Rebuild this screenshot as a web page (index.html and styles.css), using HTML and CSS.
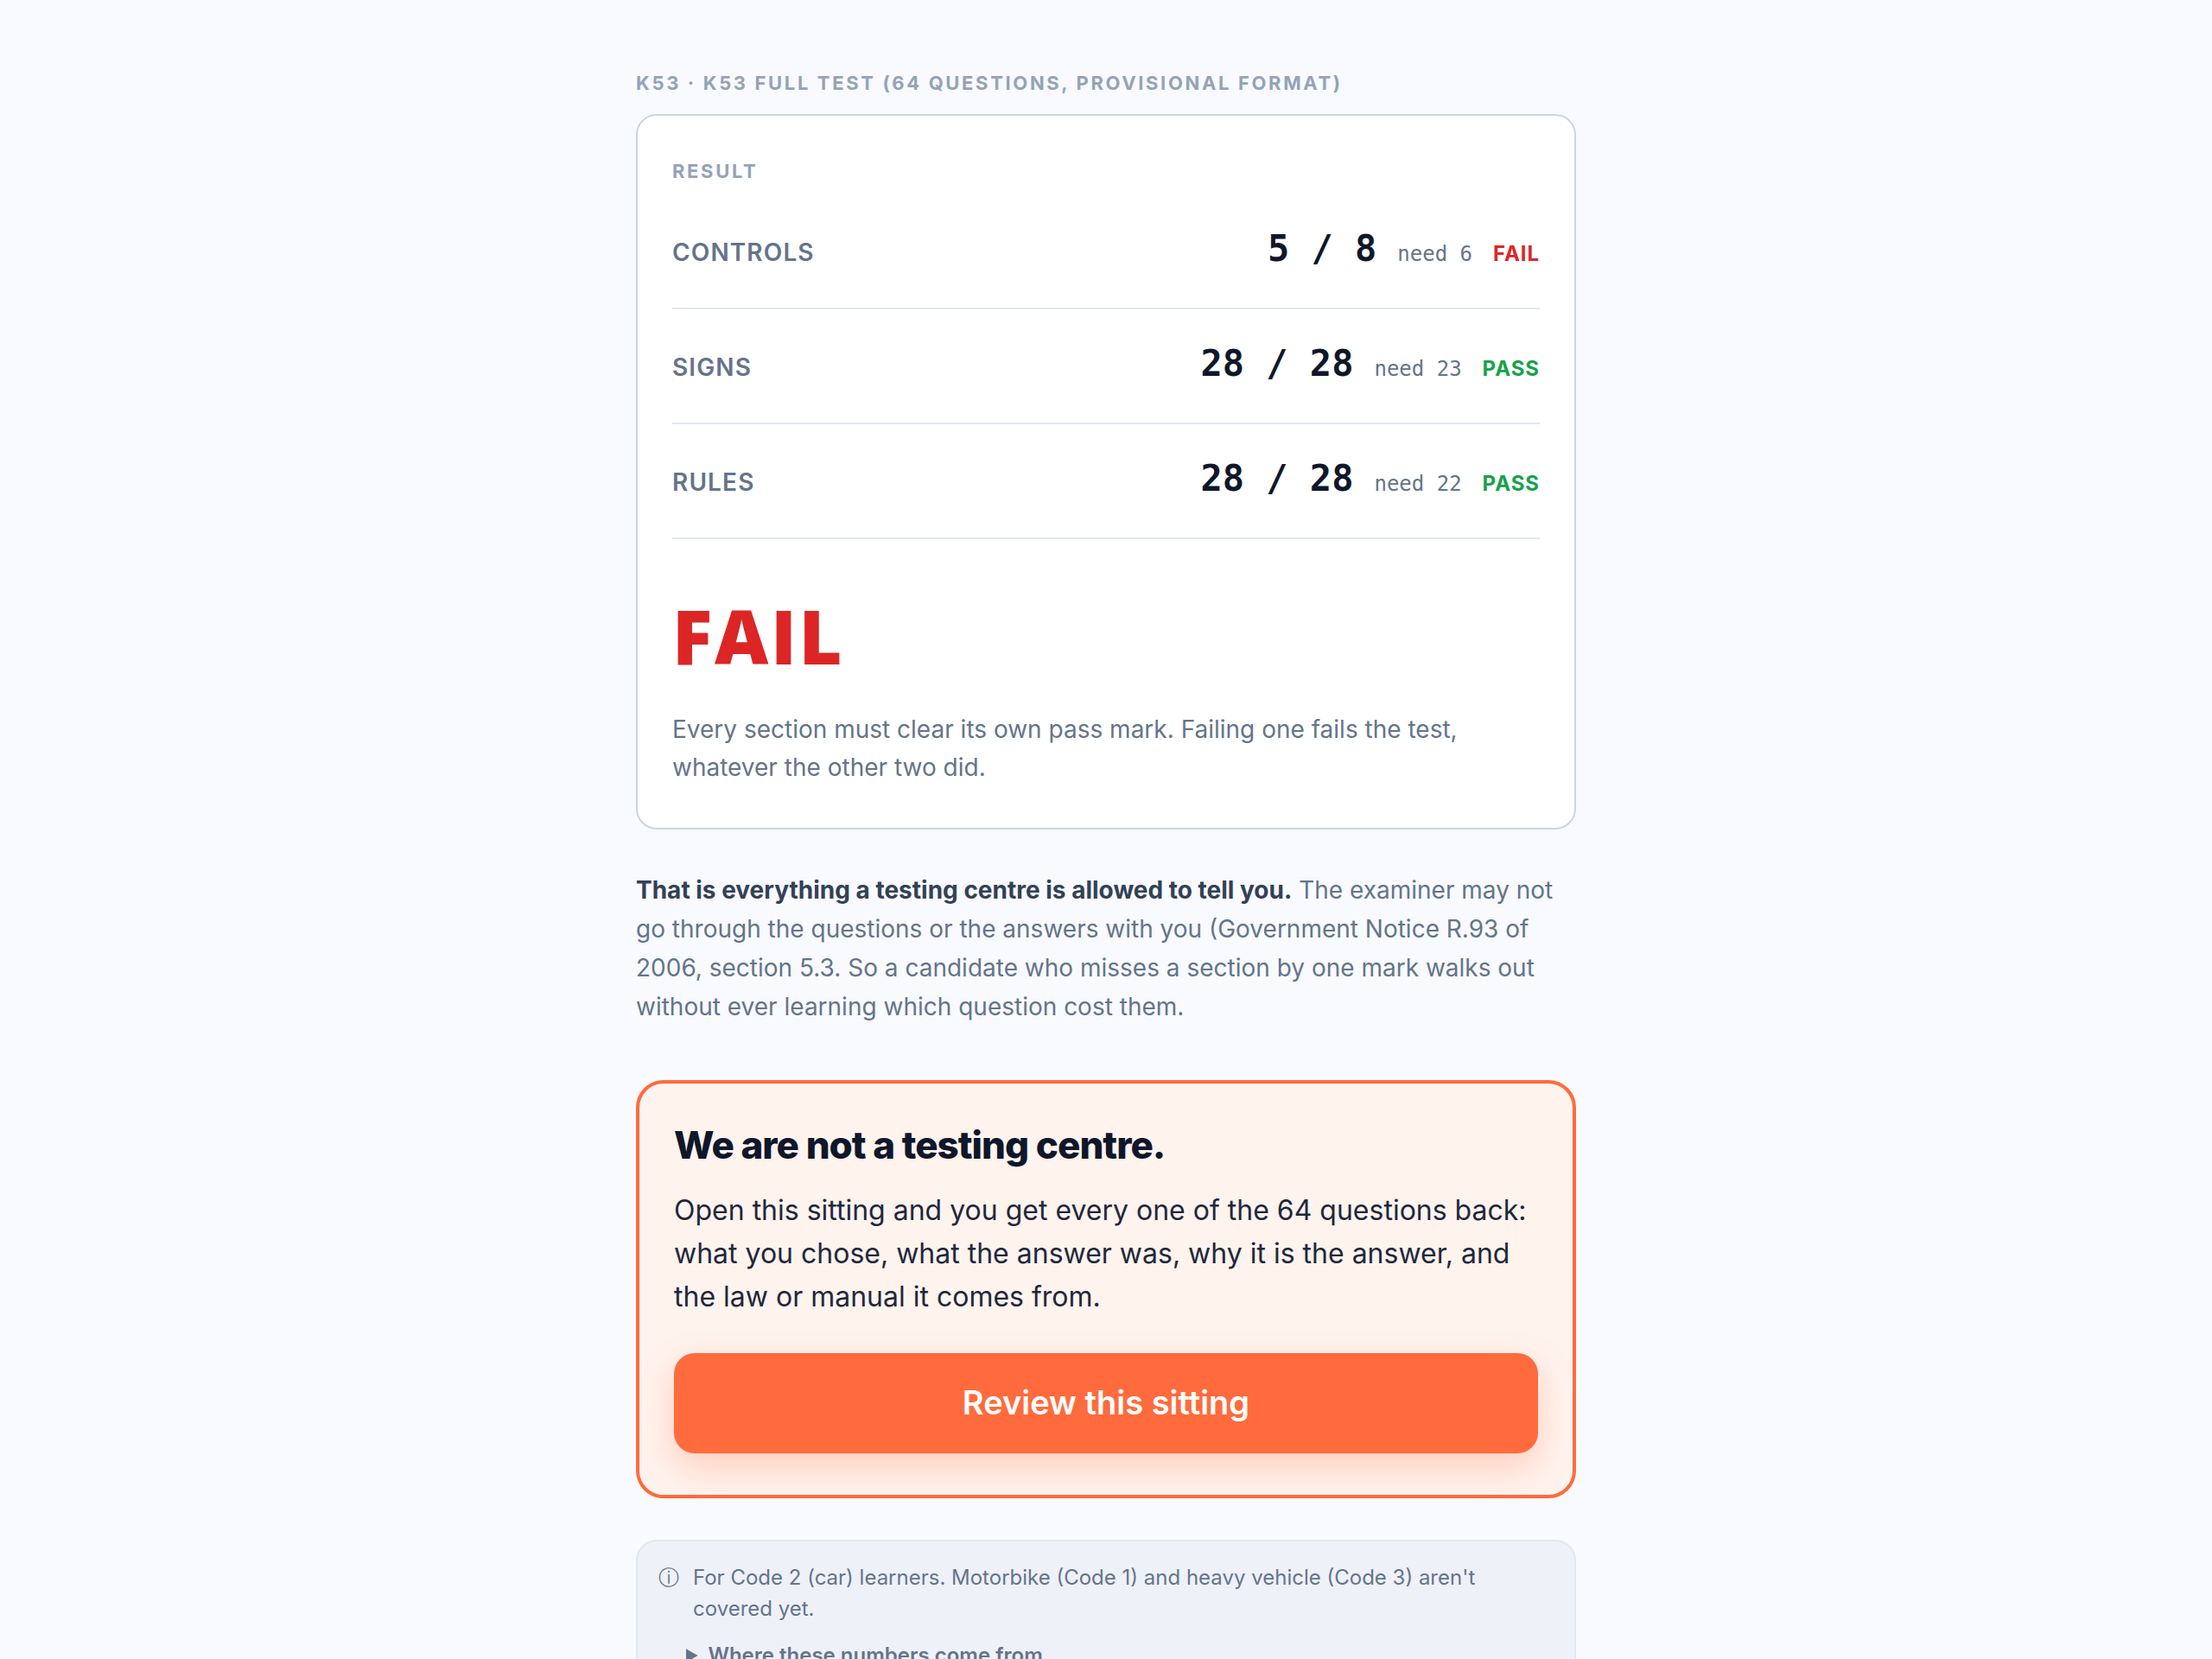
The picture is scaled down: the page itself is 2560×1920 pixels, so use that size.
FILE: index.html
```html
<!DOCTYPE html>
<html lang="en">
<head>
<meta charset="utf-8">
<title>K53 full test result</title>
<link rel="stylesheet" href="styles.css">
</head>
<body>
<main class="page">
  <p class="eyebrow">K53 · K53 full test (64 questions, provisional format)</p>

  <section class="card result">
    <h1 class="label">Result</h1>
    <dl class="scores">
      <div class="score">
        <dt class="score-name">Controls</dt>
        <dd class="score-value"><span class="marks">5 / 8</span><span class="need">need 6</span><span class="verdict fail">FAIL</span></dd>
      </div>
      <div class="score">
        <dt class="score-name">Signs</dt>
        <dd class="score-value"><span class="marks">28 / 28</span><span class="need">need 23</span><span class="verdict pass">PASS</span></dd>
      </div>
      <div class="score">
        <dt class="score-name">Rules</dt>
        <dd class="score-value"><span class="marks">28 / 28</span><span class="need">need 22</span><span class="verdict pass">PASS</span></dd>
      </div>
    </dl>
    <p class="outcome fail">FAIL</p>
    <p class="note">Every section must clear its own pass mark. Failing one fails the test, whatever the other two did.</p>
  </section>

  <p class="note explain"><strong>That is everything a testing centre is allowed to tell you.</strong> The examiner may not go through the questions or the answers with you (Government Notice R.93 of 2006, section 5.3. So a candidate who misses a section by one mark walks out without ever learning which question cost them.</p>

  <section class="card offer">
    <h2 class="offer-title">We are not a testing centre.</h2>
    <p class="offer-text">Open this sitting and you get every one of the 64 questions back: what you chose, what the answer was, why it is the answer, and the law or manual it comes from.</p>
    <button class="review" type="button">Review this sitting</button>
  </section>

  <aside class="card scope">
    <div class="scope-row">
      <span class="scope-icon" aria-hidden="true">ⓘ</span>
      <p class="scope-text">For Code 2 (car) learners. Motorbike (Code 1) and heavy vehicle (Code 3) aren't covered yet.</p>
    </div>
    <details class="sources">
      <summary>Where these numbers come from</summary>
    </details>
  </aside>
</main>
</body>
</html>
```
FILE: styles.css
```css
* {
  box-sizing: border-box;
}

html {
  background: #f8fafd;
}

body {
  margin: 0;
  font-family: Inter, "Liberation Sans", sans-serif;
  color: #0f172a;
}

h1, h2, p, dl, dd {
  margin: 0;
}

.page {
  max-width: 1152px;
  margin: 0 auto;
  padding: 80px 32px;
}

.eyebrow,
.label {
  font-size: 22px;
  line-height: 32px;
  font-weight: 700;
  letter-spacing: 0.12em;
  text-transform: uppercase;
  color: #94a3b8;
}

.eyebrow {
  margin-bottom: 20px;
}

.card {
  border: 2px solid #cbd5e1;
  border-radius: 24px;
}

.result {
  padding: 48px 40px;
  background: #fff;
}

.scores {
  margin-top: 11px;
}

.score {
  display: flex;
  align-items: baseline;
  justify-content: space-between;
  min-height: 133px;
  padding: 33px 0 30px;
  border-bottom: 2px solid #e2e8f0;
}

.score-name {
  font-size: 28px;
  line-height: 60px;
  font-weight: 600;
  letter-spacing: 0.04em;
  text-transform: uppercase;
  color: #64748b;
}

.score-value {
  display: flex;
  align-items: baseline;
  gap: 24px;
  line-height: 60px;
}

.marks,
.need {
  font-family: "DejaVu Sans Mono", monospace;
}

.marks {
  font-size: 42px;
  font-weight: 700;
}

.need {
  font-size: 24px;
  color: #64748b;
}

.verdict {
  font-size: 24px;
  font-weight: 700;
  letter-spacing: 0.04em;
}

.fail {
  color: #dc2626;
}

.pass {
  color: #16a34a;
}

.outcome {
  margin: 70px 0 44px;
  font-family: "Open Sans", sans-serif;
  font-size: 86px;
  line-height: 84px;
  font-weight: 800;
  letter-spacing: 0.03em;
}

.note {
  font-size: 28px;
  line-height: 45px;
  color: #64748b;
}

.result .note {
  line-height: 44px;
}

.explain {
  margin: 48px 0 62px;
}

.explain strong {
  font-weight: 700;
  color: #334155;
}

.offer {
  padding: 40px 40px 48px;
  border: 4px solid #ff6b3d;
  border-radius: 32px;
  background: #fff3ee;
}

.offer-title {
  font-size: 44px;
  line-height: 62px;
  font-weight: 800;
  letter-spacing: -1px;
}

.offer-text {
  margin: 20px 0 40px;
  font-size: 32px;
  line-height: 50px;
  color: #1e293b;
}

.review {
  display: block;
  width: 100%;
  padding: 33px 24px 35px;
  border: 0;
  border-radius: 24px;
  background: #ff6b3d;
  box-shadow: 0 16px 40px rgba(255, 107, 61, 0.28);
  font: 600 38px/48px Inter, sans-serif;
  color: #fff;
}

.scope {
  margin-top: 48px;
  padding: 24px;
  border-color: #e2e8f0;
  background: #eef1f8;
  font-size: 24px;
  line-height: 36px;
  color: #64748b;
}

.scope-row {
  display: flex;
  gap: 16px;
}

.sources {
  margin: 18px 0 0 32px;
}

.sources summary {
  font-weight: 600;
}
```
